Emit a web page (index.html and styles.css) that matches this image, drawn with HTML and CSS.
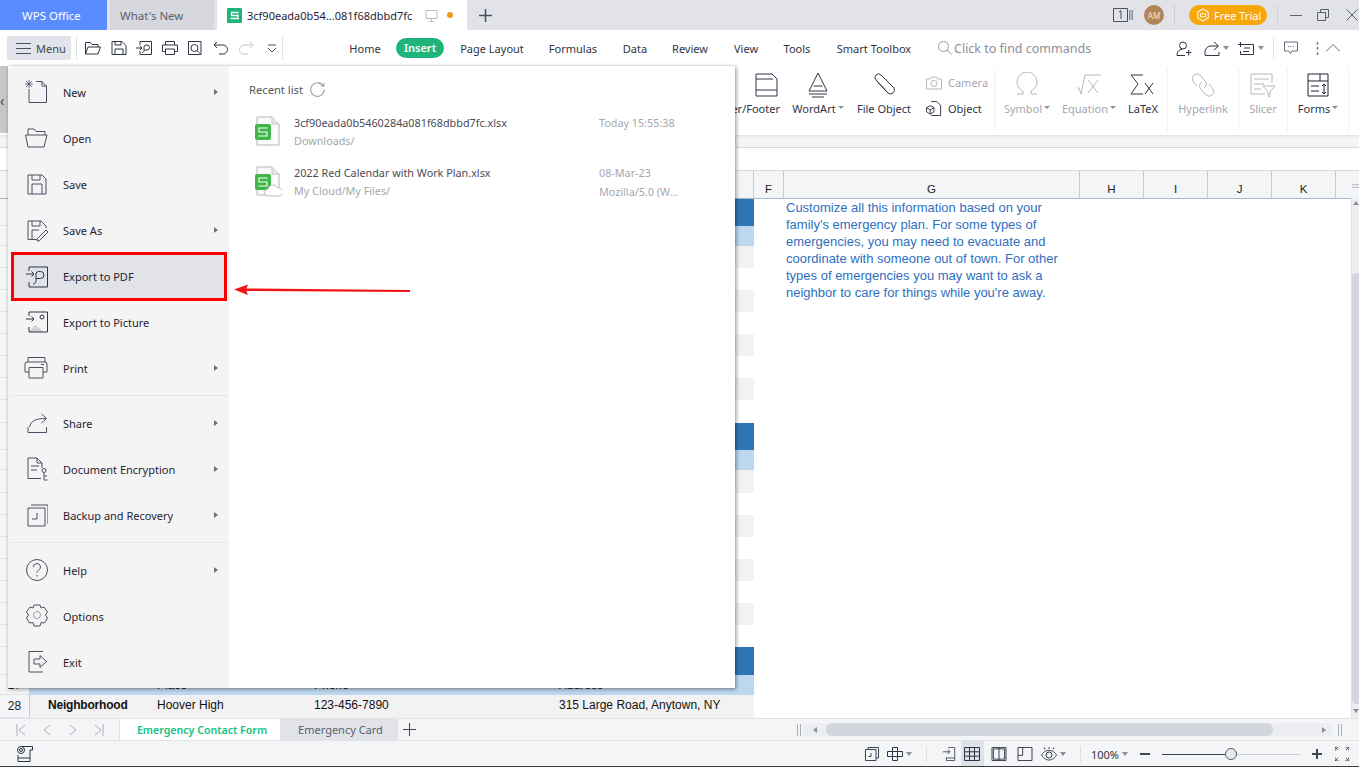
FILE: index.html
```html
<!DOCTYPE html>
<html lang="en">
<head>
<meta charset="utf-8">
<title>WPS Office</title>
<link rel="stylesheet" href="styles.css">
</head>
<body>
<div class="app">
  <header class="tabbar">
    <div class="tab tab-home">WPS Office</div>
    <div class="tab tab-new">What's New</div>
    <div class="tab tab-doc">
      <svg class="s-logo" viewBox="0 0 15 15"><rect width="15" height="15" rx="1" fill="#1fb57a"/><path d="M11.5 4.500H4.500v3h6.500v3H3.500" fill="none" stroke="#fff" stroke-width="1.300"/></svg>
      <span class="doc-name">3cf90eada0b54...081f68dbbd7fc</span>
      <svg class="ic-13" viewBox="0 0 13 13"><path d="M1 1.500h11v8H1zM6.500 9.500v2.500M4 12.500h5" fill="none" stroke="#b9bcc4"/></svg>
      <span class="dot"></span>
    </div>
    <svg class="plus" viewBox="0 0 13 13"><path d="M6.500 0v13M0 6.500h13" stroke="#4a5063" stroke-width="1.500"/></svg>
    <div class="tab-right">
      <svg class="ic-20" viewBox="0 0 20 14"><path d="M.5.500h14v13H.5z" fill="none" stroke="#4a5063"/><path d="M16.500 2v10M18 2v10M19.500 2v10" stroke="#8b8f9b"/><path d="M6 4l2-1.500V11" fill="none" stroke="#4a5063"/></svg>
      <span class="avatar">AM</span>
      <span class="vsep"></span>
      <span class="trial"><svg class="ic-14" viewBox="0 0 14 16"><path d="M7 1l6 3.500v7L7 15l-6-3.500v-7z" fill="none" stroke="#fff" stroke-width="1.200"/><path d="M4 6l1.500 1.500L7 5.500l1.500 2L10 6v4H4z" fill="none" stroke="#fff"/></svg>Free Trial</span>
      <span class="vsep vsep-b"></span>
      <svg class="win win-min" viewBox="0 0 12 12"><path d="M0 6.500h12" stroke="#5b6070"/></svg>
      <svg class="win win-max" viewBox="0 0 12 12"><path d="M.5 3.500h8v8h-8zM3.500 3.500v-3h8v8h-3" fill="none" stroke="#5b6070"/></svg>
      <svg class="win win-close" viewBox="0 0 12 12"><path d="M.5.500l11 11M11.500.500l-11 11" stroke="#5b6070"/></svg>
    </div>
  </header>

  <nav class="toolbar">
    <div class="menu-btn"><svg class="ic-15" viewBox="0 0 15 11"><path d="M0 .500h15M0 5.500h15M0 10.500h15" stroke="#4a5063"/></svg>Menu</div>
    <span class="tsep"></span>
    <div class="quick">
      <svg viewBox="0 0 16 14"><path d="M.5 13V1.500h5l1.500 2h6V6M.5 13l2.500-7h12.500L13 13z" fill="none" stroke="#2f3446"/></svg>
      <svg viewBox="0 0 16 14"><path d="M1 .500h10l4 4v9H1zM4 13.500V8h8v5.500M4 .500V4h6V.500" fill="none" stroke="#2f3446"/></svg>
      <svg viewBox="0 0 16 14"><path d="M4 4V.500h11.500v13H4V10M0 7h6M4 5l2 2-2 2M6 11.500c2 0 2-1.500 2-3V6a2 2 0 0 1 2-2h1a2.500 2.500 0 0 1 0 5H8" fill="none" stroke="#2f3446"/></svg>
      <svg viewBox="0 0 16 14"><path d="M3.500 4V.500h9V4M3.500 10.500H.5V4h15v6.500h-3M3.500 8h9v5.500h-9z" fill="none" stroke="#2f3446"/></svg>
      <svg viewBox="0 0 16 14"><path d="M14 6V.500H1.500v13H14zM7.500 3.500a3.500 3.500 0 1 0 0 7 3.500 3.500 0 0 0 0-7zM10 9.500l3 3" fill="none" stroke="#2f3446"/></svg>
      <svg viewBox="0 0 16 14"><path d="M4 1L1 4l3 3M1 4h9a4.500 4.500 0 0 1 0 9H6" fill="none" stroke="#2f3446"/></svg>
      <svg viewBox="0 0 16 14"><path d="M12 1l3 3-3 3M15 4H6a4.500 4.500 0 0 0 0 9h4" fill="none" stroke="#c3c6cd"/></svg>
      <svg viewBox="0 0 16 14"><path d="M4 4h8M4 7l4 4 4-4" fill="none" stroke="#4a5063"/></svg>
    </div>
    <span class="tsep tsep-b"></span>
    <div class="menu-tabs">
      <span class="mt w-home">Home</span>
      <span class="mt mt-on">Insert</span>
      <span class="mt w-page">Page Layout</span>
      <span class="mt w-form">Formulas</span>
      <span class="mt w-data">Data</span>
      <span class="mt w-rev">Review</span>
      <span class="mt w-view">View</span>
      <span class="mt w-tools">Tools</span>
      <span class="mt w-smart">Smart Toolbox</span>
    </div>
    <div class="search"><svg class="ic-14" viewBox="0 0 14 14"><circle cx="5.500" cy="5.500" r="5" fill="none" stroke="#8c9ab0"/><path d="M9 9l4.500 4.500" stroke="#8c9ab0"/></svg>Click to find commands</div>
    <div class="tool-right">
      <svg class="ic-16" viewBox="0 0 16 15"><circle cx="7" cy="4.500" r="3.500" fill="none" stroke="#2f3446"/><path d="M1 14.500c0-4 2-6 5-6M10 11.500h5.500M12.700 9v5.500M1 14.500h8" fill="none" stroke="#2f3446"/></svg>
      <svg class="ic-16" viewBox="0 0 16 15"><path d="M1 14V10C2 7 4 5 7 5h7M10 1l4.500 4L10 9M1 14.500h14V11" fill="none" stroke="#2f3446"/></svg>
      <span class="caret"></span>
      <svg class="ic-16 ml-13" viewBox="0 0 16 15"><path d="M4 3.500h11.500v10H2.500V10M6 7h6M5 10.500h6M0 3.500h5M2.500 1v5" fill="none" stroke="#2f3446"/></svg>
      <span class="caret"></span>
      <span class="tsep tsep-c"></span>
      <svg class="ic-14 ml-10" viewBox="0 0 14 13"><path d="M.5.500h13v9H8l-1.500 2.500L5 9.500H.5z" fill="none" stroke="#6a6f7d"/><path d="M4 5h1M6.500 5h1M9 5h1" stroke="#6a6f7d"/></svg>
      <svg class="ic-3" viewBox="0 0 3 13"><path d="M1.500 0v2.500M1.500 5v2.500M1.500 10.500V13" stroke="#6a6f7d" stroke-width="1.500"/></svg>
      <svg class="ic-14 ml-11" viewBox="0 0 14 8"><path d="M0 7.500L7 .5l7 7" fill="none" stroke="#6a6f7d"/></svg>
    </div>
  </nav>

  <section class="ribbon">
    <div class="rb-left">‹</div>
    <div class="rb rb-hf"><svg class="rb-ic" viewBox="0 0 26 26"><path d="M2 2h16l5 5v17H2zM2 7h17M2 18h21" fill="none" stroke="#2f3446"/></svg><span>Header/Footer</span></div>
    <div class="rb rb-wa"><svg class="rb-ic" viewBox="0 0 26 26"><path d="M13 1l9 18H4zM8.500 14h9M4 22h18M7 25h12" fill="none" stroke="#2f3446"/></svg><span>WordArt<i class="mini"></i></span></div>
    <div class="rb rb-fo"><svg class="rb-ic" viewBox="0 0 26 26"><path d="M5 8l12 13a4 4 0 0 0 6-5L10 3a3.500 3.500 0 0 0-5 5l11 12" fill="none" stroke="#2f3446"/></svg><span>File Object</span></div>
    <div class="rb-col">
      <div class="rb-row off"><svg class="ic-16" viewBox="0 0 16 14"><path d="M.5 3.500h4l1-2h5l1 2h4v10H.5z" fill="none" stroke="#b5b8c0"/><circle cx="8" cy="8" r="3" fill="none" stroke="#b5b8c0"/></svg>Camera</div>
      <div class="rb-row"><svg class="ic-16" viewBox="0 0 16 16"><path d="M5 .500h6l4 4v11H5M8 7l-4-2-4 2v4.500L4 14l4-2.500zM0 7l4 2.500L8 7M4 9.500V14" fill="none" stroke="#2f3446"/></svg>Object</div>
    </div>
    <span class="rsep"></span>
    <div class="rb rb-sym off"><svg class="rb-ic" viewBox="0 0 26 26"><path d="M3 22h6v-3C5 17 3 13 3 10a10 10 0 0 1 20 0c0 3-2 7-6 9v3h6" fill="none" stroke="#b5b8c0"/></svg><span>Symbol<i class="mini"></i></span></div>
    <div class="rb rb-eq off"><svg class="rb-ic" viewBox="0 0 26 26"><path d="M1 16l2 0 2 6L9 3h16M12 8l10 13M22 8L12 21" fill="none" stroke="#b5b8c0"/></svg><span>Equation<i class="mini"></i></span></div>
    <div class="rb rb-ltx"><svg class="rb-ic" viewBox="0 0 26 26"><path d="M13 3H1l7 9-7 10h12M15 11l8 11M23 11l-8 11" fill="none" stroke="#2f3446"/></svg><span>LaTeX</span></div>
    <span class="rsep"></span>
    <div class="rb rb-hl off"><svg class="rb-ic" viewBox="0 0 26 26"><path d="M4 3a4.500 4.500 0 0 1 6 0l6 7a4.500 4.500 0 0 1-2 6M22 23a4.500 4.500 0 0 1-6 0l-6-7a4.500 4.500 0 0 1 2-6M4 3a4.500 4.500 0 0 0-1 6l4 5M22 23a4.500 4.500 0 0 0 1-6l-4-5" fill="none" stroke="#b5b8c0"/></svg><span>Hyperlink</span></div>
    <span class="rsep"></span>
    <div class="rb rb-sl off"><svg class="rb-ic" viewBox="0 0 26 26"><path d="M15 22H1V2h21v9M4 7h15M4 12h10M4 17h7M13 14h12l-5 6v5l-2-1v-4z" fill="none" stroke="#b5b8c0"/></svg><span>Slicer</span></div>
    <span class="rsep"></span>
    <div class="rb rb-fm"><svg class="rb-ic" viewBox="0 0 26 26"><path d="M3 2h20v22H3zM3 9h20M15 2v7M6 14h8M6 19h8M19 12v10M17 14l2-2 2 2M17 20l2 2 2-2" fill="none" stroke="#1f2433"/></svg><span>Forms<i class="mini"></i></span></div>
    <span class="rsep"></span>
  </section>

  <div class="band"></div>
  <div class="formula"></div>

  <div class="col-head">
    <span class="ch ch-rows"></span>
    <span class="ch ch-a"></span>
    <span class="ch ch-f">F</span>
    <span class="ch ch-g">G</span>
    <span class="ch ch-s">H</span>
    <span class="ch ch-s">I</span>
    <span class="ch ch-s">J</span>
    <span class="ch ch-s">K</span>
    <span class="ch ch-end"></span>
    <span class="sb-top"><svg class="sb-grip" viewBox="0 0 8 4"><path d="M0 .500h8M0 3.500h8" stroke="#a8adba"/></svg></span>
  </div>

  <main class="sheet">
    <div class="rows">
      <div class="row h27"><span class="rh"></span><span class="cells dark"></span></div>
      <div class="row h20"><span class="rh"></span><span class="cells light"></span></div>
      <div class="row h22"><span class="rh"></span><span class="cells gray"></span></div>
      <div class="row h22"><span class="rh"></span><span class="cells"></span></div>
      <div class="row h22"><span class="rh"></span><span class="cells gray"></span></div>
      <div class="row h22"><span class="rh"></span><span class="cells"></span></div>
      <div class="row h22"><span class="rh"></span><span class="cells gray"></span></div>
      <div class="row h22"><span class="rh"></span><span class="cells"></span></div>
      <div class="row h22"><span class="rh"></span><span class="cells gray"></span></div>
      <div class="row h23"><span class="rh"></span><span class="cells"></span></div>
      <div class="row h27"><span class="rh"></span><span class="cells dark"></span></div>
      <div class="row h20"><span class="rh"></span><span class="cells light"></span></div>
      <div class="row h23"><span class="rh"></span><span class="cells gray"></span></div>
      <div class="row h22"><span class="rh"></span><span class="cells"></span></div>
      <div class="row h22"><span class="rh"></span><span class="cells gray"></span></div>
      <div class="row h22"><span class="rh"></span><span class="cells"></span></div>
      <div class="row h22"><span class="rh"></span><span class="cells gray"></span></div>
      <div class="row h22"><span class="rh"></span><span class="cells"></span></div>
      <div class="row h22"><span class="rh"></span><span class="cells gray"></span></div>
      <div class="row h22"><span class="rh"></span><span class="cells"></span></div>
      <div class="row h28"><span class="rh"></span><span class="cells dark"></span></div>
      <div class="row h20"><span class="rh">27</span><span class="cells light"><span class="c-a"></span><span class="c-b">Place</span><span class="c-c">Phone</span><span class="c-d">Address</span></span></div>
      <div class="row h23"><span class="rh">28</span><span class="cells gray text-row"><span class="c-a strong">Neighborhood</span><span class="c-b">Hoover High</span><span class="c-c">123-456-7890</span><span class="c-d">315 Large Road, Anytown, NY</span></span></div>
    </div>
    <div class="note">Customize all this information based on your family's emergency plan. For some types of emergencies, you may need to evacuate and coordinate with someone out of town. For other types of emergencies you may want to ask a neighbor to care for things while you're away.</div>
    <aside class="vscroll"><span class="vs-up"></span><span class="vs-thumb"></span><span class="vs-down"></span></aside>
  </main>

  <div class="sheet-tabs">
    <div class="nav-arrows">
      <svg viewBox="0 0 10 12"><path d="M1 0v12M9 1L3 6l6 5" fill="none" stroke="#a9adb8"/></svg>
      <svg viewBox="0 0 10 12"><path d="M8 1L2 6l6 5" fill="none" stroke="#a9adb8"/></svg>
      <svg viewBox="0 0 10 12"><path d="M2 1l6 5-6 5" fill="none" stroke="#a9adb8"/></svg>
      <svg viewBox="0 0 10 12"><path d="M9 0v12M1 1l6 5-6 5" fill="none" stroke="#a9adb8"/></svg>
    </div>
    <div class="st st-on">Emergency Contact Form</div>
    <div class="st st-off">Emergency Card</div>
    <svg class="st-add" viewBox="0 0 13 13"><path d="M6.500 0v13M0 6.500h13" stroke="#3f4452"/></svg>
    <svg class="grip grip-l" viewBox="0 0 4 12"><path d="M.5 0v12M3.500 0v12" stroke="#a8adba"/></svg>
    <div class="hscroll"><span class="hs-l"></span><span class="hs-thumb"></span><span class="hs-r"></span></div>
    <svg class="grip" viewBox="0 0 4 12"><path d="M.5 0v12M3.500 0v12" stroke="#a8adba"/></svg>
  </div>

  <footer class="status">
    <svg class="st-print" viewBox="0 0 18 16"><circle cx="6" cy="4" r="3.500" fill="none" stroke="#2f3446"/><circle cx="6" cy="4" r="1.500" fill="none" stroke="#2f3446"/><path d="M6 .5h11.500V4H15v8H3M3 12v3.500h12V12M3 9v3" fill="none" stroke="#2f3446"/></svg>
    <div class="status-right">
      <svg class="si w14" viewBox="0 0 14 14"><path d="M.5 2.500h10.500v11H.5zM3 2V.5h10.500V11H11M6 6v3.500H3.500" fill="none" stroke="#3f4452"/></svg>
      <svg class="si w16 m8" viewBox="0 0 16 14"><path d="M5.500.5h5v4h5v5h-5v4h-5v-4h-5v-5h5zM5.500 4.500v5M10.500 4.500v5M5.500 4.500h5M5.500 9.500h5" fill="none" stroke="#2f3446"/></svg>
      <span class="caret cs"></span>
      <span class="svsep"></span>
      <svg class="si w14 m15" viewBox="0 0 14 16"><path d="M6 .5h7.500v15H4V12M0 5.500h8M5.500 3l2.500 2.500L5.500 8M4 12.500h9.500" fill="none" stroke="#3f4452"/></svg>
      <span class="view-on"><svg class="si w16" viewBox="0 0 16 14"><path d="M.5.500h15v13H.5zM.5 4.800h15M.5 9.200h15M5.500.500v13M10.500.500v13" fill="none" stroke="#2f3446"/></svg></span>
      <svg class="si w16 m7" viewBox="0 0 16 15"><path d="M.5.500h15v14H.5zM8 .5v14M2 2h12v11H2z" fill="none" stroke="#2f3446"/></svg>
      <svg class="si w16 m10" viewBox="0 0 16 15"><path d="M.5.500h15v14H.5zM5.500.5V9H.5M5.500 9" fill="none" stroke="#2f3446"/></svg>
      <svg class="si w16 m8" viewBox="0 0 16 14"><path d="M.5 8C3 4 5.500 3.500 8 3.500S13 4 15.500 8C13 12 10.500 13 8 13S3 12 .5 8z" fill="none" stroke="#3f4452"/><circle cx="8" cy="8" r="3" fill="none" stroke="#3f4452"/><path d="M8 0v2M3 .5L4 2.500M13 .5L12 2.500" stroke="#3f4452"/></svg>
      <span class="caret cs"></span>
      <span class="svsep"></span>
      <span class="zoom-val">100%</span>
      <span class="caret cs"></span>
      <svg class="si w10 minus" viewBox="0 0 10 2"><path d="M0 1h10" stroke="#3f4452" stroke-width="2"/></svg>
      <div class="slider"><span class="sl-fill"></span><span class="sl-knob"></span><span class="sl-rest"></span></div>
      <svg class="si w10 m12" viewBox="0 0 10 10"><path d="M0 5h10M5 0v10" stroke="#3f4452" stroke-width="2"/></svg>
      <svg class="si w14 m13" viewBox="0 0 14 14"><path d="M0 4V0h4M0 0l3 3M10 0h4v4M14 0l-3 3M0 10v4h4M0 14l3-3M14 10v4h-4M14 14l-3-3" fill="none" stroke="#3f4452"/></svg>
    </div>
  </footer>

  <div class="app-menu">
    <div class="menu-left">
      <div class="mi"><svg class="mi-ic" viewBox="0 0 24 24"><path d="M5 9v13.500h17.500V6L18 1.500h-6M18 1.500V6h4.500" fill="none" stroke="#4a5063"/><path d="M5 0v8M1 4h8M2 1l6 6M8 1L2 7" stroke="#4a5063" stroke-width=".8"/></svg><span>New</span><i class="arr"></i></div>
      <div class="mi"><svg class="mi-ic" viewBox="0 0 24 24"><path d="M4 9V3h6l2 2.500h9V9M1.500 9H23l-3 12H4z" fill="none" stroke="#4a5063"/></svg><span>Open</span></div>
      <div class="mi"><svg class="mi-ic" viewBox="0 0 24 24"><path d="M4 3h14l4 4v15H4zM8 22V12h10v10M8 3v5h8V3" fill="none" stroke="#4a5063"/></svg><span>Save</span></div>
      <div class="mi"><svg class="mi-ic" viewBox="0 0 24 24"><path d="M13 21.500H4V3h13l5 5v2M8 21V12h7M8 3v5h8V3M13 21l9-9 2 2-9 9h-2z" fill="none" stroke="#4a5063"/></svg><span>Save As</span><i class="arr"></i></div>
      <div class="mi mi-hl"><svg class="mi-ic" viewBox="0 0 24 24"><path d="M5 6V2h18.500v20H5v-5M2 9h8M7.500 6.500L10 9l-2.500 2.500M9 19c3 0 3-3 3-5V9a2.500 2.500 0 0 1 2.500-2.500h2a3.500 3.500 0 0 1 0 7H12" fill="none" stroke="#2f3446"/></svg><span>Export to PDF</span></div>
      <div class="mi"><svg class="mi-ic" viewBox="0 0 24 24"><path d="M5 22l6-7 5 4 4 3z" fill="#cfd1d6"/><path d="M5 6V2h18.500v20H5v-5M2 9h8M7.500 6.500L10 9l-2.500 2.500" fill="none" stroke="#2f3446"/><circle cx="18" cy="7" r="2" fill="none" stroke="#2f3446"/></svg><span>Export to Picture</span></div>
      <div class="mi"><svg class="mi-ic" viewBox="0 0 24 24"><path d="M4 6V1.500h17V6M5 16H1V8a2 2 0 0 1 2-2h18a2 2 0 0 1 2 2v8h-4M5 11.500h14V22H5zM17 8.500h3" fill="none" stroke="#4a5063"/></svg><span>Print</span><i class="arr"></i></div>
      <div class="msep"></div>
      <div class="mi"><svg class="mi-ic" viewBox="0 0 24 24"><path d="M4 16v5.500h18.500V16M5.500 16C7 10 11 7.500 22 7.500M17.500 3l5 4.500-5 4.500" fill="none" stroke="#4a5063"/></svg><span>Share</span><i class="arr"></i></div>
      <div class="mi"><svg class="mi-ic" viewBox="0 0 24 24"><path d="M18 11V6l-5-5H4v20.500h13M13 1v5h5M7 9h8M7 13h6" fill="none" stroke="#4a5063"/><circle cx="20" cy="13.500" r="2" fill="none" stroke="#4a5063"/><path d="M20 15.500v7.500h3.500M20 19h3" fill="none" stroke="#4a5063"/></svg><span>Document Encryption</span><i class="arr"></i></div>
      <div class="mi"><svg class="mi-ic" viewBox="0 0 24 24"><path d="M4 5h17v18H4zM7 2h17v19M13 10v6H8" fill="none" stroke="#4a5063"/></svg><span>Backup and Recovery</span><i class="arr"></i></div>
      <div class="msep"></div>
      <div class="mi"><svg class="mi-ic" viewBox="0 0 24 24"><circle cx="13" cy="12" r="10.500" fill="none" stroke="#4a5063"/><path d="M9.500 9a3.500 3.500 0 1 1 5 3.200c-1 .6-1.500 1.300-1.500 2.500M13 17v1.500" fill="none" stroke="#4a5063"/></svg><span>Help</span><i class="arr"></i></div>
      <div class="mi"><svg class="mi-ic" viewBox="0 0 24 24"><path d="M10 1l6 0 1 3 3-1 3.500 5-2 3 2 3-3 5-3.500-.500-1 3.500h-6l-1-3.500-3.500.5-3-5 2-3-2-3L6 3l3 1z" fill="none" stroke="#4a5063"/><circle cx="13" cy="11" r="3.500" fill="none" stroke="#9a9da6"/></svg><span>Options</span></div>
      <div class="mi"><svg class="mi-ic" viewBox="0 0 24 24"><path d="M19 1.500H5v20.500h14M10 9h6V5.500l6.500 6-6.500 6V14h-6z" fill="none" stroke="#4a5063"/></svg><span>Exit</span></div>
    </div>
    <div class="menu-right">
      <div class="recent-title">Recent list<svg class="ic-14 refresh" viewBox="0 0 14 14"><path d="M12.500 4A6.300 6.300 0 1 0 13.300 7M10 3.800h3V.8" fill="none" stroke="#9a9da6"/></svg></div>
      <div class="recent">
        <svg class="file-ic" viewBox="0 0 28 32"><path d="M3 2h15l7 7v21H3z" fill="#fafafa" stroke="#b6b6b6"/><path d="M18 2v7h7" fill="#e8e8e8" stroke="#c6c6c6"/><rect x="1" y="9" width="16" height="16" rx="2" fill="#3fb54a"/><path d="M13.500 13H5v4h8v4H4.500" fill="none" stroke="#fff" stroke-width="1.100"/></svg>
        <div class="rec-main"><div class="rec-name">3cf90eada0b5460284a081f68dbbd7fc.xlsx</div><div class="rec-sub">Downloads/</div></div>
        <div class="rec-meta"><div>Today 15:55:38</div></div>
      </div>
      <div class="recent">
        <svg class="file-ic" viewBox="0 0 28 32"><path d="M3 2h15l7 7v21H3z" fill="#fafafa" stroke="#b6b6b6"/><path d="M18 2v7h7" fill="#e8e8e8" stroke="#c6c6c6"/><rect x="1" y="9" width="16" height="16" rx="2" fill="#3fb54a"/><path d="M13.500 13H5v4h8v4H4.500" fill="none" stroke="#fff" stroke-width="1.100"/><path d="M14 31a3.500 3.500 0 0 1 0-7 5 5 0 0 1 9.500-1 4 4 0 0 1 2 8z" fill="#fff" stroke="#bdbdbd"/></svg>
        <div class="rec-main"><div class="rec-name">2022 Red Calendar with Work Plan.xlsx</div><div class="rec-sub">My Cloud/My Files/</div></div>
        <div class="rec-meta"><div>08-Mar-23</div><div class="rec-by">Mozilla/5.0 (W...</div></div>
      </div>
    </div>
  </div>

  <svg class="callout" viewBox="0 0 176 12"><path d="M0 5.500L14 .5 L12.500 4.500 L176 6 L176 8 L12.500 7 L14 11z" fill="#f01414"/></svg>
</div>
</body>
</html>
```

FILE: styles.css
```css
* { box-sizing: border-box; }
html, body { margin: 0; padding: 0; }
body { font-family: "Noto Sans", "Open Sans", sans-serif; font-size: 11px; color: #2f3446; background: #fff; overflow: hidden; }
svg { display: block; flex: none; }
.app { position: relative; width: 1359px; height: 767px; overflow: hidden; display: flex; flex-direction: column; border-bottom: 1px solid #3a3d42; }

/* title bar */
.tabbar { height: 30px; flex: none; display: flex; align-items: stretch; background: #e1e3e8; }
.tab { display: flex; align-items: center; font-size: 11.500px; }
.tab-home { width: 107px; background: #5b8cff; color: #fff; padding-left: 22px; }
.tab-new { width: 104px; margin-left: 3px; background: #d6d8dd; color: #5a5f6c; padding-left: 10px; }
.tab-doc { width: 250px; margin-left: 3px; background: #fff; color: #1f2433; padding-left: 10px; }
.s-logo { width: 15px; height: 15px; margin-right: 5px; }
.doc-name { width: 178px; white-space: nowrap; font-size: 11px; }
.ic-13 { width: 13px; height: 13px; }
.dot { width: 6px; height: 6px; border-radius: 50%; background: #eb9c17; margin-left: 9px; }
.plus { width: 13px; height: 13px; margin: 9px 0 0 12px; }
.tab-right { margin-left: auto; display: flex; align-items: center; }
.ic-20 { width: 20px; height: 14px; }
.avatar { width: 20px; height: 20px; border-radius: 50%; background: #b28459; color: #f2e4d6; font-size: 8px; display: flex; align-items: center; justify-content: center; margin-left: 11px; }
.vsep { width: 1px; height: 20px; background: #cfd1d6; margin-left: 10px; }
.vsep-b { margin-left: 10px; }
.trial { width: 78px; height: 20px; border-radius: 10px; background: #f7a70a; color: #fff; font-size: 11px; display: flex; align-items: center; gap: 4px; padding-left: 7px; margin-left: 14px; }
.ic-14 { width: 14px; height: 14px; }
.win { width: 12px; height: 12px; }
.win-min { margin-left: 12px; }
.win-max { margin-left: 15px; }
.win-close { margin-left: 17px; margin-right: 1px; }

/* toolbar */
.toolbar { height: 36px; flex: none; display: flex; align-items: center; background: #fff; padding-left: 7px; }
.menu-btn { width: 64px; height: 24px; background: #e1e4ea; border-radius: 2px; display: flex; align-items: center; gap: 5px; padding-left: 9px; font-size: 11px; color: #3f4452; }
.ic-15 { width: 15px; height: 11px; }
.tsep { width: 1px; height: 24px; background: #e1e3e8; margin-left: 5px; }
.quick { display: flex; align-items: center; gap: 9.500px; margin-left: 8px; }
.quick svg { width: 16px; height: 14px; }
.tsep-b { margin-left: 2.500px; }
.menu-tabs { display: flex; align-items: center; margin-left: 51px; font-size: 11px; color: #2f3446; white-space: nowrap; }
.mt { display: block; text-align: center; }
.w-home { width: 62px; }
.mt-on { width: 48px; height: 20px; line-height: 20px; background: #1fb57a; color: #fff; border-radius: 10px; font-weight: 600; }
.w-page { width: 96px; }
.w-form { width: 66px; }
.w-data { width: 58px; }
.w-rev { width: 52px; }
.w-view { width: 60px; }
.w-tools { width: 42px; }
.w-smart { width: 112px; }
.search { display: flex; align-items: center; gap: 2px; margin-left: 8px; color: #8c8f99; font-size: 12.500px; white-space: nowrap; }
.tool-right { margin-left: auto; display: flex; align-items: center; padding-right: 19px; }
.ic-16 { width: 16px; height: 15px; }
.ic-16 + .ic-16 { margin-left: 12px; }
.caret { width: 0; height: 0; border: 3px solid transparent; border-top: 4px solid #8b8f9b; border-bottom: 0; margin-left: 3px; }
.ml-13 { margin-left: 9px; }
.ml-13 + .caret { margin-left: 4px; }
.tsep-c { margin-left: 9px; height: 20px; }
.ml-10 { margin-left: 10px; }
.ic-3 { width: 3px; height: 13px; margin-left: 18px; }
.ml-11 { margin-left: 7px; height: 8px; }

/* ribbon */
.ribbon { height: 69px; flex: none; background: #fff; display: flex; align-items: stretch; box-shadow: 0 1px 3px rgba(0,0,0,.1); position: relative; }
.rb-left { width: 8px; background: #c6c7ca; color: #444; font-size: 14px; line-height: 70px; margin-bottom: 2px; overflow: hidden; }
.rb { display: flex; flex-direction: column; align-items: center; padding-top: 6px; color: #2f3446; white-space: nowrap; font-size: 11px; }
.rb span { display: block; margin-top: 3px; height: 16px; line-height: 16px; }
.rb-ic { width: 26px; height: 26px; }
.rb.off, .rb-row.off { color: #a5a8b0; }
.mini { display: inline-block; width: 0; height: 0; border: 3px solid transparent; border-top: 3px solid #8b8f9b; border-bottom: 0; margin: 0 0 4px 2px; }
.rb-hf { width: 772px; align-items: flex-end; }
.rb-wa { width: 76px; }
.rb-fo { width: 56px; }
.rb-col { display: flex; flex-direction: column; gap: 8px; padding-top: 7px; margin-left: 14px; width: 68px; }
.rb-row { display: flex; align-items: center; gap: 6px; height: 18px; color: #2f3446; }
.rsep { width: 1px; background: #f0f1f3; margin: 2px 0 4px; }
.rb-sym { width: 61px; padding-left: 3px; }
.rb-eq { width: 60px; padding-left: 6px; }
.rb-ltx { width: 51px; padding-left: 3px; }
.rb-hl { width: 70px; }
.rb-sl { width: 48px; }
.rb-fm { width: 60px; }

.band { height: 13px; flex: none; background: #f4f5f7; border-bottom: 1px solid #d8dae2; }
.formula { height: 23px; flex: none; background: #fff; border-bottom: 1px solid #d8dae2; }

.col-head { height: 28px; flex: none; display: flex; align-items: stretch; background: #f4f5f7; font-size: 12px; color: #222; }
.ch { display: flex; align-items: center; justify-content: center; padding-top: 9px; border-right: 1px solid #c3c9d8; border-bottom: 1px solid #a9b3c9; font-family: "Liberation Sans", sans-serif; font-size: 11.500px; }
.ch-rows { width: 30px; }
.ch-a { width: 724px; }
.ch-f { width: 30px; }
.ch-g { width: 296px; }
.ch-s { width: 64px; }
.ch-end { width: 15px; border-right: 0; }
.sb-top { width: 8px; padding: 13px 0 0 1px; background: #f4f5f7; }
.sb-grip { width: 7px; height: 4px; }

/* sheet */
.sheet { flex: none; height: 519px; display: flex; background: #fff; font-family: "Liberation Sans", sans-serif; font-size: 12px; color: #111; }
.rows { width: 754px; flex: none; }
.row { display: flex; }
.h20 { height: 20px; }
.h22 { height: 22px; }
.h23 { height: 23px; }
.h27 { height: 27px; }
.h28 { height: 28px; }
.rh { width: 30px; flex: none; background: #f4f5f7; border-right: 1px solid #c3c9d8; border-bottom: 1px solid #dfe2ea; font-size: 12px; color: #222; display: flex; align-items: center; justify-content: center; }
.cells { flex: 1; display: flex; align-items: center; overflow: hidden; }
.text-row { padding-bottom: 3px; }
.dark { background: #2e75b6; }
.light { background: #bdd7ee; }
.gray { background: #f2f2f2; }
.c-a { width: 127px; padding-left: 18px; flex: none; white-space: nowrap; }
.c-b { width: 157px; flex: none; }
.c-c { width: 245px; flex: none; }
.c-d { flex: 1; white-space: nowrap; }
.strong { font-weight: 700; letter-spacing: -.2px; }
.note { width: 597px; flex: none; padding: 0 280px 0 32px; color: #2f6fc0; line-height: 17px; font-size: 13px; }
.vscroll { width: 8px; flex: none; background: #eceef2; border-left: 1px solid #e1e3e8; display: flex; flex-direction: column; }
.vs-up { height: 74px; position: relative; }
.vs-up::before { content: ""; display: block; width: 0; height: 0; border: 3px solid transparent; border-bottom: 4px solid #8b8f9b; border-top: 0; margin: 2px 0 0 1px; }
.vs-thumb { flex: 1; background: #d4d6de; border-radius: 4px 0 0 4px; }
.vs-down { height: 14px; }
.vs-down::before { content: ""; display: block; width: 0; height: 0; border: 3px solid transparent; border-top: 4px solid #8b8f9b; border-bottom: 0; margin: 5px 0 0 1px; }

/* sheet tabs */
.sheet-tabs { height: 22px; flex: none; display: flex; align-items: stretch; background: #f4f5f7; border-top: 1px solid #e1e3e8; }
.nav-arrows { width: 120px; display: flex; align-items: center; gap: 16px; padding-left: 16px; border-right: 1px solid #e1e3e8; }
.nav-arrows svg { width: 10px; height: 12px; }
.st { display: flex; align-items: center; justify-content: center; font-size: 11px; }
.st-on { width: 160px; background: #fff; color: #14c184; font-weight: 600; font-size: 10.600px; padding-left: 4px; }
.st-off { width: 118px; background: #e1e3e8; color: #5a5f6c; padding-left: 3px; }
.st-add { width: 13px; height: 13px; margin: 4px 0 0 5px; }
.grip { width: 4px; height: 12px; margin: 5px 0 0 0; }
.grip-l { margin-left: 381px; }
.hscroll { width: 529px; height: 13px; margin: 4px 6px 0 2px; background: #eceef2; display: flex; align-items: center; }
.hs-l { width: 23px; display: flex; justify-content: center; }
.hs-l::before { content: ""; width: 0; height: 0; border: 3px solid transparent; border-right: 4px solid #8b8f9b; border-left: 0; }
.hs-thumb { width: 447px; height: 13px; background: #d4d6de; border-radius: 6px; }
.hs-r { flex: 1; display: flex; justify-content: flex-end; padding-right: 6px; }
.hs-r::before { content: ""; width: 0; height: 0; border: 3px solid transparent; border-left: 4px solid #8b8f9b; border-right: 0; }

/* status bar */
.status { flex: 1; display: flex; align-items: center; background: #f4f5f7; border-top: 1px solid #e1e3e8; padding-left: 15px; }
.st-print { width: 18px; height: 16px; }
.status-right { display: flex; align-items: center; margin-left: auto; padding-right: 10px; }
.si { height: 14px; }
.w10 { width: 10px; height: 10px; }
.w14 { width: 14px; height: 14px; }
.w16 { width: 16px; height: 14px; }
.m7 { margin-left: 7px; }
.m8 { margin-left: 8px; }
.m10 { margin-left: 10px; }
.m12 { margin-left: 12px; }
.m13 { margin-left: 13px; }
.m15 { margin-left: 15px; }
.minus { margin-left: 12px; height: 2px; }
.cs { margin-left: 3px; }
.svsep { width: 1px; height: 16px; background: #dcdee3; margin-left: 14px; }
.view-on { width: 23px; height: 26px; background: #dfe2e8; margin-left: 5px; display: flex; align-items: center; justify-content: center; }
.zoom-val { margin-left: 10px; font-size: 11px; }
.slider { display: flex; align-items: center; width: 138px; margin-left: 12px; }
.sl-fill { width: 63px; height: 1px; background: #3f4452; flex: none; }
.sl-knob { width: 12px; height: 12px; border-radius: 50%; background: #e9eaec; border: 1px solid #5b6070; flex: none; }
.sl-rest { flex: 1; height: 1px; background: #c9ccd4; }

/* application menu (pop-over) */
.app-menu { position: absolute; left: 8px; top: 66px; width: 727px; height: 622px; display: flex; background: #fff; box-shadow: 1px 1px 4px rgba(0,0,0,.45); }
.menu-left { width: 221px; flex: none; background: #f4f4f4; padding-top: 4px; }
.mi { height: 46px; display: flex; align-items: center; padding: 0 11px 2px 16px; color: #1f2433; font-size: 11px; }
.mi-ic { width: 24px; height: 24px; margin-right: 15px; }
.mi .arr { margin-left: auto; width: 0; height: 0; border: 3.500px solid transparent; border-left: 4px solid #6a7080; border-right: 0; }
.mi-hl { height: 49px; margin: -2px 2px -1px 3px; padding: 0 0 0 10px; background: #e1e3e8; border: 3px solid #f00; }
.msep { height: 1px; background: #e4e5e9; margin: 3px 0 2px 2px; }
.msep + .mi { margin-top: 5px; }
.menu-right { flex: 1; padding: 15px 0 0 20px; }
.recent-title { display: flex; align-items: center; gap: 7px; font-size: 11.200px; color: #55585f; height: 16px; }
.refresh { width: 15px; height: 15px; }
.recent { display: flex; margin: 0 0 0 5px; height: 50px; }
.recent-title + .recent { margin-top: 18px; }
.file-ic { width: 28px; height: 32px; margin-right: 12px; flex: none; }
.rec-main { width: 305px; flex: none; }
.rec-name { color: #4a4d55; font-size: 10.800px; height: 17px; line-height: 16px; white-space: nowrap; }
.rec-sub { color: #a5a7ad; font-size: 10.800px; line-height: 18px; }
.rec-meta { color: #a5a7ad; font-size: 10.800px; line-height: 16px; white-space: nowrap; }
.rec-by { line-height: 20px; margin-top: 1px; }

/* annotation */
.callout { position: absolute; left: 234px; top: 284px; width: 176px; height: 12px; }
```
